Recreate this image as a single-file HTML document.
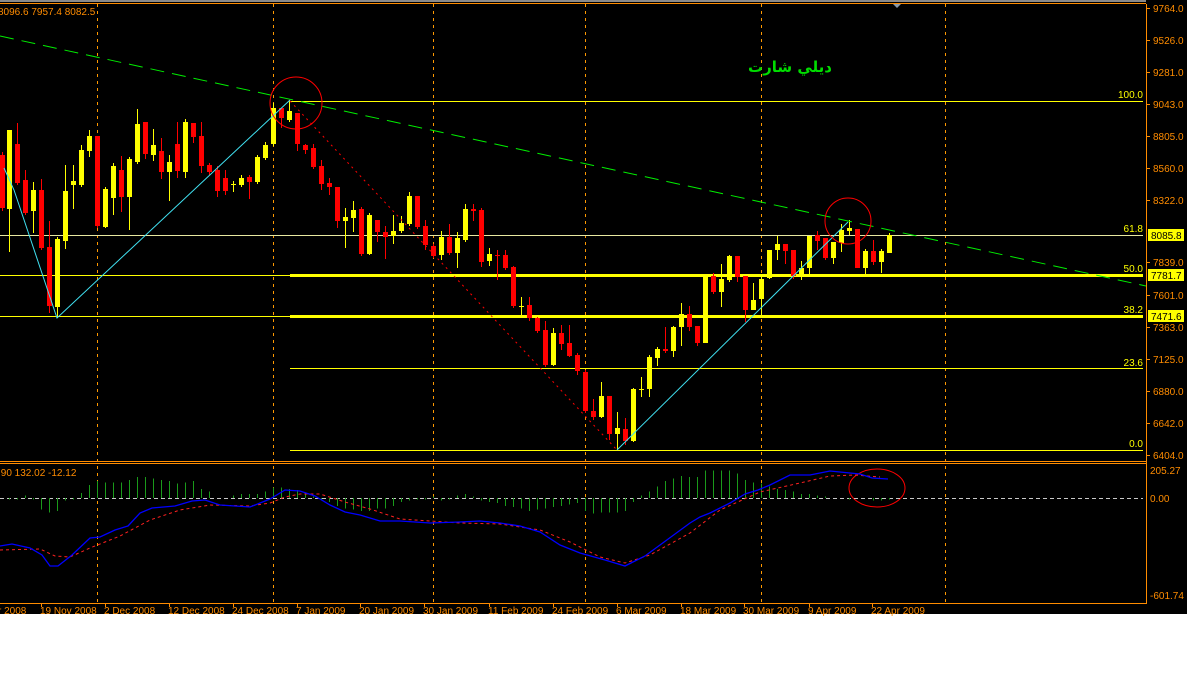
<!DOCTYPE html>
<html><head><meta charset="utf-8"><style>
html,body{margin:0;padding:0;background:#fff;}
svg{display:block;}
text{font-family:"Liberation Sans",sans-serif;font-size:10px;}
line,rect{shape-rendering:crispEdges;}
</style></head><body>
<svg id="s" width="1187" height="691" xmlns="http://www.w3.org/2000/svg">
<rect x="0" y="0" width="1187" height="614" fill="#000"/>
<rect x="0" y="0" width="1146" height="2" fill="#8a8a8a"/>
<line x1="0" y1="3.5" x2="1146" y2="3.5" stroke="#ff8c00" stroke-width="1"/>
<polygon points="893,4 901,4 897,8" fill="#8899aa"/>
<g id="grid"></g>
<g id="cand"></g>
<g id="over"></g>
</svg>
<script>
var h="";
[97,273,433,585,761,945].forEach(function(x){
 h+='<line x1="'+(x+0.5)+'" y1="4" x2="'+(x+0.5)+'" y2="602" stroke="#ff9900" stroke-dasharray="3,4"/>';
});
h+='<line x1="290" y1="101.5" x2="1143" y2="101.5" stroke="#ffff00"/>';
h+='<line x1="0" y1="235.5" x2="1143" y2="235.5" stroke="#e8e8a0"/>';
h+='<line x1="0" y1="275.5" x2="290" y2="275.5" stroke="#ffff00"/>';
h+='<rect x="290" y="274" width="853" height="3" fill="#ffff00"/>';
h+='<line x1="0" y1="316.5" x2="290" y2="316.5" stroke="#ffff00"/>';
h+='<rect x="290" y="315" width="853" height="3" fill="#ffff00"/>';
h+='<line x1="290" y1="368.5" x2="1143" y2="368.5" stroke="#ffff00"/>';
h+='<line x1="290" y1="450.5" x2="1143" y2="450.5" stroke="#ffff00"/>';
[["100.0",98],["61.8",232],["50.0",272],["38.2",313],["23.6",366],["0.0",447]].forEach(function(a){
 h+='<text x="1143" y="'+a[1]+'" fill="#ffff00" text-anchor="end">'+a[0]+'</text>';});
document.getElementById("grid").innerHTML=h;

var C=[
[2,155,208,'r'],[9,130,209,'y',130,252],[17,144,183,'r',123,185],[25,180,213,'r',170,215],[33,190,211,'y',182,233],[41,190,248,'r',179,250],
[49,247,306,'r',221,313],[57,239,307,'y',237,318],[65,191,241,'y',165,249],[73,181,185,'y',165,209],[81,150,185,'y',145,187],[89,136,151,'y',130,157],
[97,136,226,'r',136,228],[105,189,227,'y',187,228],[113,166,198,'y',163,215],[121,170,197,'r',156,212],[129,159,197,'y',157,230],[137,124,162,'y',109,164],
[145,122,154,'r',122,159],[153,145,155,'y',129,161],[161,151,172,'r',138,179],[169,162,172,'y',155,201],[177,144,171,'r',122,178],[185,122,172,'y',119,178],
[193,123,137,'r',123,143],[201,136,166,'r',122,173],[209,165,172,'r',163,175],[217,170,191,'r',166,197],[225,178,191,'r',170,195],[233,184,185,'y',181,192],
[241,178,185,'y',175,187],[249,177,182,'r',175,199],[257,157,182,'y',155,184],[265,145,158,'y',142,160],[273,108,144,'y',103,146],[281,108,118,'r',108,128],
[289,111,120,'y',100,122],[297,113,144,'r',113,151],[305,145,150,'r',144,154],[313,148,167,'r',144,169],[321,166,184,'r',160,190],[329,183,187,'r',178,195],
[337,187,221,'r',187,228],[345,217,221,'y',208,248],[353,210,218,'y',201,232],[361,209,254,'r',207,256],[369,215,254,'y',213,255],[377,220,232,'r',220,242],
[385,232,237,'r',226,259],[393,231,236,'y',215,244],[401,223,231,'y',216,233],[409,196,224,'y',192,226],[417,196,227,'r',196,229],[425,226,245,'r',220,250],
[433,246,256,'r',244,258],[441,237,255,'y',231,260],[449,237,253,'r',224,255],[457,238,253,'y',232,268],[465,209,240,'y',204,242],[473,209,211,'r',204,221],
[481,210,262,'r',208,267],[489,254,261,'y',248,266],[497,255,256,'r',250,280],[505,255,268,'r',250,270],[513,267,306,'r',266,308],[521,306,307,'y',297,316],
[529,305,318,'r',297,321],[537,318,331,'r',317,333],[545,330,365,'r',321,367],[553,333,365,'y',328,366],[561,333,344,'r',325,350],[569,343,356,'r',325,357],
[577,355,371,'r',353,375],[585,372,411,'r',370,413],[593,411,417,'r',399,420],[601,396,417,'y',382,418],[609,396,434,'r',396,440],[617,428,434,'y',412,450],
[625,429,441,'r',418,445],[633,389,441,'y',388,442],[641,389,390,'y',377,397],[649,357,389,'y',355,397],[657,349,358,'y',347,366],[665,349,351,'r',327,353],
[673,327,351,'y',326,357],[681,314,327,'y',303,346],[689,314,327,'r',306,331],[697,326,343,'r',326,346],[705,276,343,'y',276,343],[713,276,292,'r',273,294],
[721,279,292,'y',264,307],[729,256,280,'y',255,282],[737,256,277,'r',256,282],[745,276,310,'r',276,322],[753,300,310,'y',283,310],[761,279,299,'y',275,316],
[769,250,278,'y',250,279],[777,244,250,'y',236,260],[785,244,251,'r',244,264],[793,250,276,'r',250,279],[801,268,276,'y',261,280],[809,236,268,'y',236,277],
[817,235,241,'r',231,250],[825,238,258,'r',238,260],[833,242,258,'y',242,264],[841,230,243,'y',224,252],[849,228,231,'y',220,235],[857,229,268,'r',229,268],
[865,251,268,'y',249,275],[873,251,262,'r',240,265],[881,251,262,'y',249,273],[889,235,253,'y',233,253]];
var g="";
C.forEach(function(c){
 var col=c[3]=='y'?'#ffff00':'#ff0000';
 var wt=c.length>4?c[4]:c[1]-3, wb=c.length>4?c[5]:c[2]+3;
 g+='<line x1="'+(c[0]+0.5)+'" y1="'+wt+'" x2="'+(c[0]+0.5)+'" y2="'+wb+'" stroke="'+col+'"/>';
 g+='<rect x="'+(c[0]-2)+'" y="'+c[1]+'" width="5" height="'+Math.max(1,c[2]-c[1])+'" fill="'+col+'"/>';
});
document.getElementById("cand").innerHTML=g;

var o="";
o+='<line x1="0" y1="36" x2="1146" y2="286" stroke="#00ee00" stroke-dasharray="14,8" style="shape-rendering:auto"/>';
o+='<polyline points="4,168 14,190 57,318 290,100" fill="none" stroke="#40e0f0"/>';
o+='<line x1="617" y1="450" x2="848" y2="222" stroke="#40e0f0" style="shape-rendering:auto"/>';
o+='<line x1="290" y1="101" x2="617" y2="450" stroke="#ff0000" stroke-dasharray="2,4" style="shape-rendering:auto"/>';
o+='<circle cx="296" cy="103" r="26" fill="none" stroke="#ff0000"/>';
o+='<circle cx="848" cy="221" r="23" fill="none" stroke="#ff0000"/>';
o+='<ellipse cx="877" cy="488" rx="28" ry="19" fill="none" stroke="#ff0000"/>';
o+='<text x="790" y="72" fill="#00dd00" font-weight="bold" text-anchor="middle" style="font-family:\'DejaVu Sans\',sans-serif;font-size:15px">ديلي شارت</text>';
o+='<text x="-2" y="15" fill="#ff8c00">8096.6 7957.4 8082.5</text>';
o+='<line x1="0" y1="461.5" x2="1146" y2="461.5" stroke="#ff8c00"/><line x1="0" y1="463.5" x2="1146" y2="463.5" stroke="#ff8c00"/>';
o+='<text x="-2" y="476" fill="#ff8c00">.90 132.02 -12.12</text>';
o+='<line x1="0" y1="498.5" x2="1143" y2="498.5" stroke="#c8c8c8" stroke-dasharray="4,3"/>';
var H=[[9,-1],[17,-1],[25,2],[33,-1],[41,-9],[49,-11],[57,-10],[65,-2],[73,-1],[81,4],[89,10],[97,13],[105,12],[113,12],[121,12],[129,14],[137,16],[145,16],[153,15],[161,14],[169,13],[177,11],[185,12],[193,13],[201,7],[209,5],[217,0],[225,0],[233,2],[241,3],[249,3],[257,3],[265,5],[273,8],[281,8],[289,7],[297,6],[305,4],[313,1],[321,-1],[329,-3],[337,-6],[345,-8],[353,-9],[361,-10],[369,-10],[377,-8],[385,-8],[393,-6],[401,-3],[409,-2],[417,-1],[425,-1],[433,1],[441,-2],[449,-1],[457,2],[465,3],[473,1],[481,-2],[489,-3],[497,-4],[505,-6],[513,-7],[521,-8],[529,-10],[537,-9],[545,-8],[553,-7],[561,-6],[569,-5],[577,-4],[585,-10],[593,-12],[601,-11],[609,-11],[617,-11],[625,-10],[633,-3],[641,2],[649,5],[657,9],[665,13],[673,15],[681,17],[689,16],[697,16],[705,21],[713,21],[721,21],[729,21],[737,19],[745,14],[753,12],[761,11],[769,9],[777,7],[785,6],[793,5],[801,3],[809,3],[817,2],[825,1],[833,0],[841,0],[849,-1],[857,0],[865,0],[873,-2],[881,-2],[889,-1]];
H.forEach(function(b){var y2=498-b[1]*1.3;o+='<line x1="'+(b[0]+0.5)+'" y1="498" x2="'+(b[0]+0.5)+'" y2="'+y2+'" stroke="#1a9a1a"/>';});
o+='<polyline fill="none" stroke="#ff2020" stroke-dasharray="3,3" points="0,550 40,549 55,556 70,557 90,548 120,536 150,520 180,510 210,505 250,506 270,503 285,497 300,494 320,494 345,502 370,509 400,519 430,521 460,523 500,524 540,530 570,542 600,557 625,563 650,555 690,533 720,510 760,492 800,483 830,476 855,475 880,477"/>';
o+='<polyline fill="none" stroke="#0000ff" stroke-width="1.3" points="0,546 12,544 30,548 42,555 50,566 58,566 72,555 90,538 100,537 115,530 128,526 140,513 152,508 175,506 192,501 205,500 220,505 250,507 270,499 285,490 300,491 315,496 330,505 345,512 360,515 380,521 400,521 430,523 460,522 480,521 500,523 520,526 540,532 560,545 580,553 605,560 625,566 645,556 660,545 690,523 700,517 710,513 730,503 745,494 758,490 770,485 790,475 810,475 830,471 860,474 872,478 888,479"/>';
o+='<line x1="1146.5" y1="4" x2="1146.5" y2="604" stroke="#ff8c00"/>';
o+='<line x1="0" y1="603.5" x2="1146" y2="603.5" stroke="#ff8c00"/>';
[["9764.0",12],["9526.0",44],["9281.0",76],["9043.0",108],["8805.0",140],["8560.0",172],["8322.0",204],["7839.0",266],["7601.0",299],["7363.0",331],["7125.0",363],["6880.0",395],["6642.0",427],["6404.0",459]].forEach(function(a){
 o+='<line x1="1146" y1="'+(a[1]-3.5)+'" x2="1150" y2="'+(a[1]-3.5)+'" stroke="#ff8c00"/><text x="1153" y="'+a[1]+'" fill="#ff8c00">'+a[0]+'</text>';});
[["8085.8",235],["7781.7",275],["7471.6",316]].forEach(function(a){
 o+='<rect x="1148" y="'+(a[1]-6)+'" width="36" height="12" fill="#ffff00"/><text x="1151" y="'+(a[1]+4)+'" fill="#000">'+a[0]+'</text>';});
o+='<text x="1150" y="474" fill="#ff8c00">205.27</text>';
o+='<text x="1150" y="502" fill="#ff8c00">0.00</text>';
o+='<text x="1150" y="599" fill="#ff8c00">-601.74</text>';
[["r 2008",-2],["19 Nov 2008",40],["2 Dec 2008",104],["12 Dec 2008",168],["24 Dec 2008",232],["7 Jan 2009",296],["20 Jan 2009",359],["30 Jan 2009",423],["11 Feb 2009",488],["24 Feb 2009",552],["6 Mar 2009",616],["18 Mar 2009",680],["30 Mar 2009",743],["9 Apr 2009",808],["22 Apr 2009",871]].forEach(function(a){
 o+='<line x1="'+(a[1]+1.5)+'" y1="603" x2="'+(a[1]+1.5)+'" y2="607" stroke="#ff8c00"/><text x="'+a[1]+'" y="614" fill="#ff8c00">'+a[0]+'</text>';});
document.getElementById("over").innerHTML=o;
</script>
</body></html>
